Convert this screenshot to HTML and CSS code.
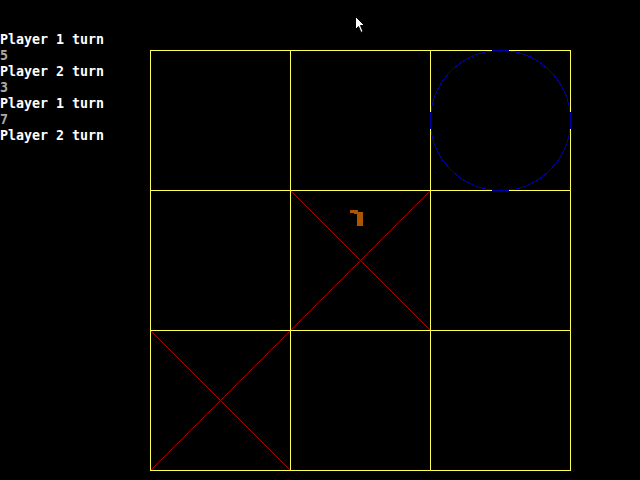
FILE: index.html
```html
<!DOCTYPE html>
<html>
<head>
<meta charset="utf-8">
<link rel="stylesheet" href="styles.css">
</head>
<body>
<div class="screen">
  <div class="log">
    <div class="turn">Player 1 turn</div>
    <div class="move">5</div>
    <div class="turn">Player 2 turn</div>
    <div class="move">3</div>
    <div class="turn">Player 1 turn</div>
    <div class="move">7</div>
    <div class="turn">Player 2 turn</div>
  </div>
  <svg class="board" width="421" height="421" viewBox="0 0 421 421">
    <g class="cross">
      <line x1="140.5" y1="140.5" x2="280.5" y2="280.5"/>
      <line x1="280.5" y1="140.5" x2="140.5" y2="280.5"/>
      <line x1="0.5" y1="280.5" x2="140.5" y2="420.5"/>
      <line x1="140.5" y1="280.5" x2="0.5" y2="420.5"/>
    </g>
    <g class="grid">
      <line x1="0" y1="0.5" x2="421" y2="0.5"/>
      <line x1="0" y1="140.5" x2="421" y2="140.5"/>
      <line x1="0" y1="280.5" x2="421" y2="280.5"/>
      <line x1="0" y1="420.5" x2="421" y2="420.5"/>
      <line x1="0.5" y1="0" x2="0.5" y2="421"/>
      <line x1="140.5" y1="0" x2="140.5" y2="421"/>
      <line x1="280.5" y1="0" x2="280.5" y2="421"/>
      <line x1="420.5" y1="0" x2="420.5" y2="421"/>
    </g>
    <circle class="nought" cx="350.5" cy="70.5" r="70"/>
    <polygon class="glyph" points="200,160 208,160 208,162 213,162 213,176 207,176 207,164 204,164 204,163 200,163"/>
  </svg>
  <svg class="cursor" width="12" height="18" viewBox="0 0 12 18">
    <path d="M0.5 0.5 L0.5 13.5 L3.5 10.5 L6 16.5 L8 15.5 L5.5 9.5 L9.5 9.5 Z" fill="#fff" stroke="#000" stroke-width="1"/>
  </svg>
</div>
</body>
</html>
```

FILE: styles.css
```css
html, body {
  margin: 0;
  padding: 0;
  background: #000;
  overflow: hidden;
}
.screen {
  position: relative;
  width: 640px;
  height: 480px;
  display: flex;
  flex-direction: row;
  align-items: flex-start;
  background: #000;
}
.log {
  width: 150px;
  padding-top: 32px;
  font-family: "DejaVu Sans Mono", "Liberation Mono", monospace;
  font-size: 13.3px;
  font-weight: bold;
  line-height: 16px;
}
.turn { color: #ffffff; white-space: nowrap; }
.move { color: #aaaaaa; }
.board {
  display: block;
  margin-top: 50px;
  shape-rendering: crispEdges;
}
.cross line { stroke: #aa0000; stroke-width: 1; }
.grid line { stroke: #ffff55; stroke-width: 1; }
.nought { fill: none; stroke: #0000aa; stroke-width: 1; }
.glyph { fill: #aa5500; }
.cursor {
  position: absolute;
  left: 355px;
  top: 16px;
}
```
